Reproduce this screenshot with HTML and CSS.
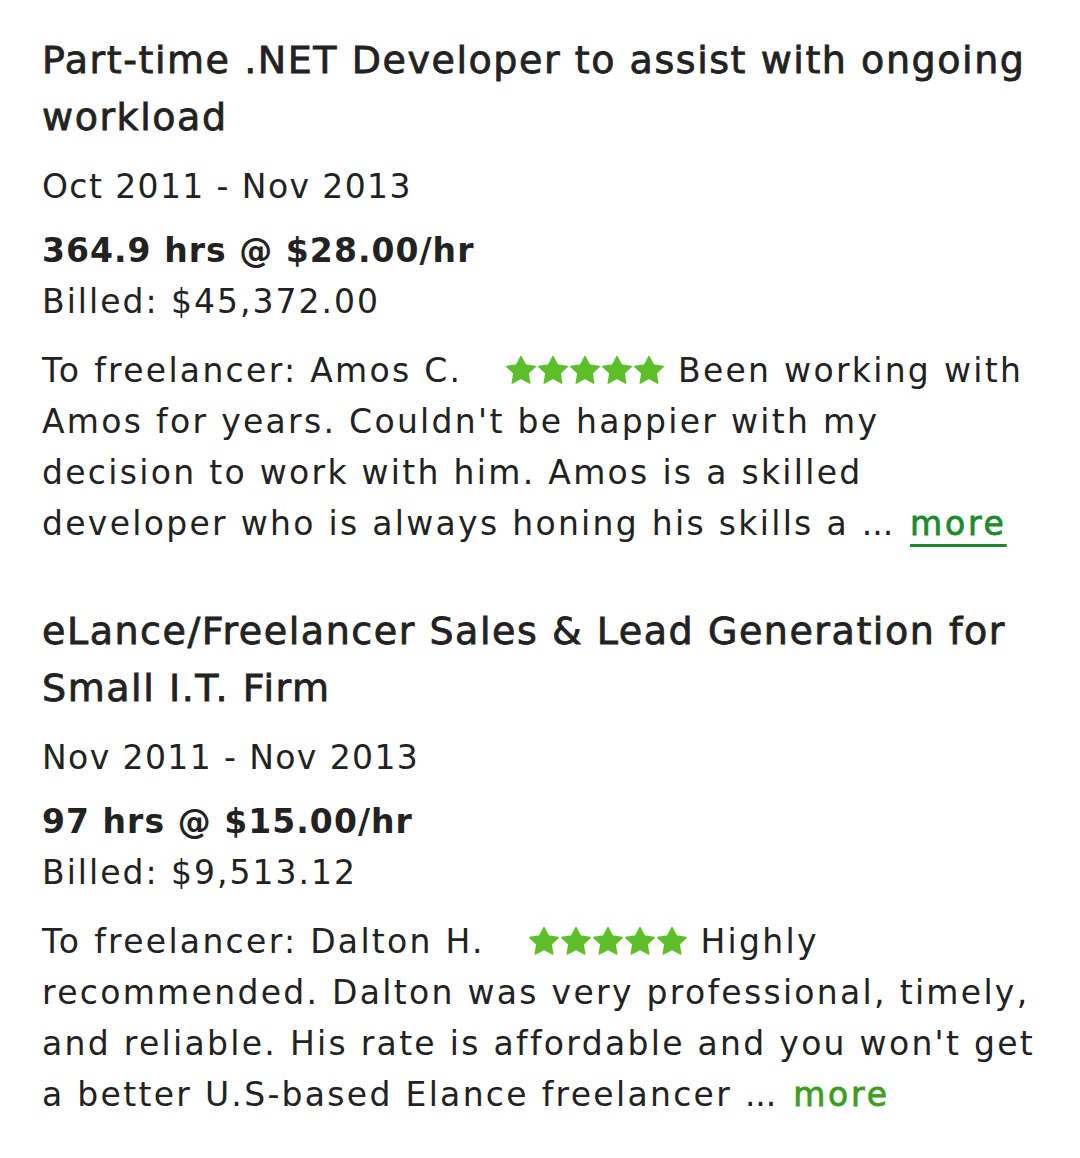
FILE: index.html
```html
<!DOCTYPE html>
<html lang="en">
<head>
<meta charset="utf-8">
<link rel="stylesheet" href="styles.css">
</head>
<body>
<main class="list">
  <article class="job">
    <h2 class="job-title">Part-time .NET Developer to assist with ongoing workload</h2>
    <p class="job-date">Oct 2011 - Nov 2013</p>
    <div class="job-pay">
      <p class="job-hours">364.9 hrs @ $28.00/hr</p>
      <p class="job-billed">Billed: $45,372.00</p>
    </div>
    <p class="job-feedback">To freelancer: Amos C. <span class="stars"><svg viewBox="0 0 160 30" width="160" height="30"><g fill="#5cbf2a" stroke="#5cbf2a" stroke-width="1.4" stroke-linejoin="round"><path d="M16 1.5 L20.4 9.9 L30.3 11.4 L23.1 18.3 L24.8 28.1 L16 23.5 L7.2 28.1 L8.9 18.3 L1.7 11.4 L11.6 9.9 Z"/><path transform="translate(32 0)" d="M16 1.5 L20.4 9.9 L30.3 11.4 L23.1 18.3 L24.8 28.1 L16 23.5 L7.2 28.1 L8.9 18.3 L1.7 11.4 L11.6 9.9 Z"/><path transform="translate(64 0)" d="M16 1.5 L20.4 9.9 L30.3 11.4 L23.1 18.3 L24.8 28.1 L16 23.5 L7.2 28.1 L8.9 18.3 L1.7 11.4 L11.6 9.9 Z"/><path transform="translate(96 0)" d="M16 1.5 L20.4 9.9 L30.3 11.4 L23.1 18.3 L24.8 28.1 L16 23.5 L7.2 28.1 L8.9 18.3 L1.7 11.4 L11.6 9.9 Z"/><path transform="translate(128 0)" d="M16 1.5 L20.4 9.9 L30.3 11.4 L23.1 18.3 L24.8 28.1 L16 23.5 L7.2 28.1 L8.9 18.3 L1.7 11.4 L11.6 9.9 Z"/></g></svg></span> Been working with Amos for years. Couldn't be happier with my decision to work with him. Amos is a skilled developer who is always honing his skills a <span class="ellipsis">...</span> <a class="more more-underline" href="#">more</a></p>
  </article>
  <article class="job">
    <h2 class="job-title">eLance/Freelancer Sales &amp; Lead Generation for Small I.T. Firm</h2>
    <p class="job-date">Nov 2011 - Nov 2013</p>
    <div class="job-pay">
      <p class="job-hours">97 hrs @ $15.00/hr</p>
      <p class="job-billed">Billed: $9,513.12</p>
    </div>
    <p class="job-feedback">To freelancer: Dalton H. <span class="stars"><svg viewBox="0 0 160 30" width="160" height="30"><g fill="#5cbf2a" stroke="#5cbf2a" stroke-width="1.4" stroke-linejoin="round"><path d="M16 1.5 L20.4 9.9 L30.3 11.4 L23.1 18.3 L24.8 28.1 L16 23.5 L7.2 28.1 L8.9 18.3 L1.7 11.4 L11.6 9.9 Z"/><path transform="translate(32 0)" d="M16 1.5 L20.4 9.9 L30.3 11.4 L23.1 18.3 L24.8 28.1 L16 23.5 L7.2 28.1 L8.9 18.3 L1.7 11.4 L11.6 9.9 Z"/><path transform="translate(64 0)" d="M16 1.5 L20.4 9.9 L30.3 11.4 L23.1 18.3 L24.8 28.1 L16 23.5 L7.2 28.1 L8.9 18.3 L1.7 11.4 L11.6 9.9 Z"/><path transform="translate(96 0)" d="M16 1.5 L20.4 9.9 L30.3 11.4 L23.1 18.3 L24.8 28.1 L16 23.5 L7.2 28.1 L8.9 18.3 L1.7 11.4 L11.6 9.9 Z"/><path transform="translate(128 0)" d="M16 1.5 L20.4 9.9 L30.3 11.4 L23.1 18.3 L24.8 28.1 L16 23.5 L7.2 28.1 L8.9 18.3 L1.7 11.4 L11.6 9.9 Z"/></g></svg></span> Highly recommended. Dalton was very professional, timely, and reliable. His rate is affordable and you won't get a better U.S-based Elance freelancer <span class="ellipsis">...</span> <a class="more more-plain" href="#">more</a></p>
  </article>
</main>
</body>
</html>
```

FILE: styles.css
```css
html, body {
  margin: 0;
  padding: 0;
  background: #ffffff;
}

body {
  font-family: "DejaVu Sans", "Open Sans", sans-serif;
  color: #222222;
}

.list {
  width: 1004px;
  padding: 32px 0 0 42px;
  display: flex;
  flex-direction: column;
  gap: 54px;
}

.job {
  display: flex;
  flex-direction: column;
}

.job p,
.job h2 {
  margin: 0;
}

.job-title {
  font-size: 38px;
  font-weight: 400;
  line-height: 57px;
  letter-spacing: 1.55px;
  -webkit-text-stroke: 0.8px #222222;
}

.job-date {
  margin-top: 15px !important;
  font-size: 33px;
  line-height: 51px;
  letter-spacing: 1.4px;
}

.job-pay {
  margin-top: 13px;
}

.job-hours {
  font-size: 33px;
  line-height: 51px;
  font-weight: 700;
  letter-spacing: 1.05px;
}

.job-billed {
  font-size: 33px;
  line-height: 51px;
  letter-spacing: 2px;
}

.job-feedback {
  margin-top: 18px !important;
  font-size: 33px;
  line-height: 51px;
  letter-spacing: 2.3px;
}

.stars {
  display: inline-block;
  margin-left: 30px;
  vertical-align: -3px;
  height: 30px;
}

.stars svg {
  display: block;
}

.ellipsis {
  letter-spacing: 0;
}

.more {
  margin-left: 4px;
  letter-spacing: 2.8px;
  -webkit-text-stroke: 0.8px currentColor;
}

.more-underline {
  color: #1d8a2e;
  text-decoration: underline;
  text-underline-offset: 9px;
  text-decoration-thickness: 3px;
}

.more-plain {
  color: #3c9d1e;
  text-decoration: none;
}
```
